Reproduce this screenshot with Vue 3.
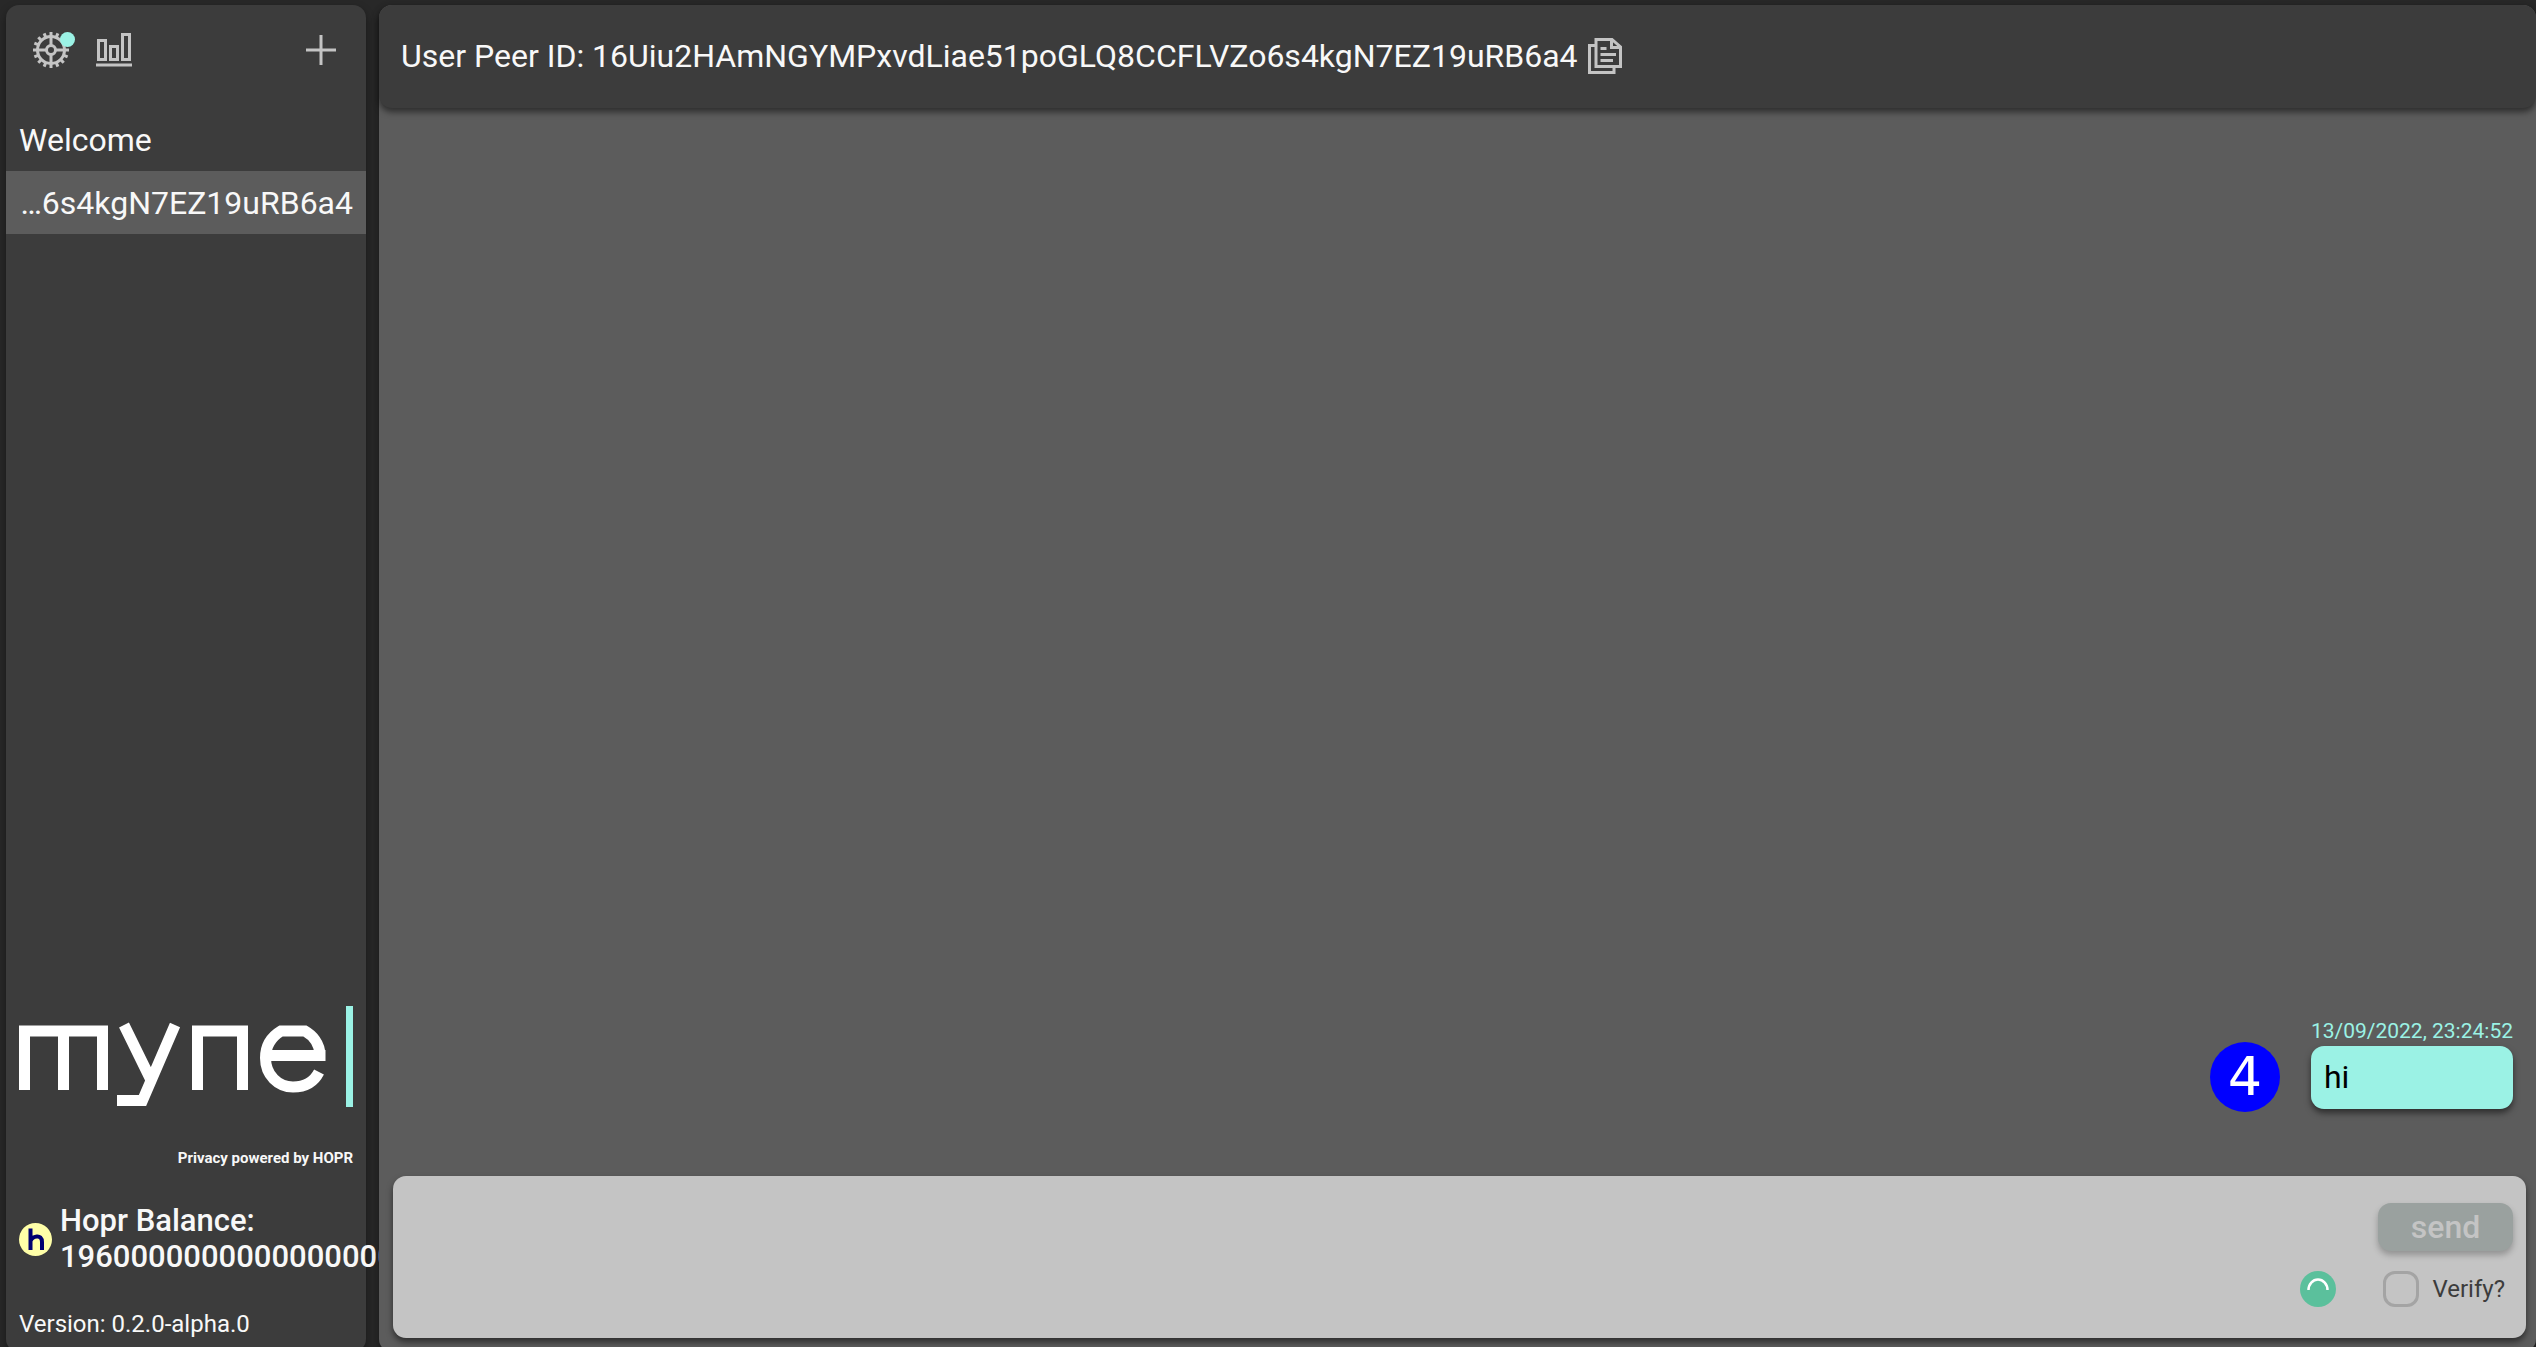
<script setup>
import { ref } from 'vue';

const peerId = '16Uiu2HAmNGYMPxvdLiae51poGLQ8CCFLVZo6s4kgN7EZ19uRB6a4';
const conversations = ref([{ id: peerId, label: '…6s4kgN7EZ19uRB6a4' }]);
const selected = ref(peerId);
const messages = ref([{ time: '13/09/2022, 23:24:52', text: 'hi', count: 4 }]);
const balance = '196000000000000000000';
const draft = ref('');
const verify = ref(false);

// 16 teeth around the settings gear
const teeth = Array.from({ length: 16 }, (_, i) => i * 22.5);

const copyPeerId = () => navigator.clipboard?.writeText(peerId);

const sendMessage = () => {
  messages.value.push({ time: new Date().toLocaleString('en-GB'), text: draft.value });
  draft.value = '';
};
</script>

<template>
  <div class="app">
    <aside class="sidebar">
      <div class="toolbar">
        <button class="icon-button settings" aria-label="Settings">
          <svg width="36" height="36" viewBox="0 0 36 36" fill="none" stroke="#c4c4c4" stroke-width="3">
            <circle cx="18" cy="18" r="13.5" />
            <circle cx="18" cy="18" r="4.5" />
            <path d="M18 4v10M18 22v10M4 18h10M22 18h10" />
            <path v-for="angle in teeth" :key="angle" d="M18 0v4" :transform="`rotate(${angle} 18 18)`" />
          </svg>
          <span class="status-dot"></span>
        </button>
        <button class="icon-button" aria-label="Statistics">
          <svg width="36" height="36" viewBox="0 0 36 36" fill="none" stroke="#c4c4c4" stroke-width="3">
            <path d="M2.5 8.500h7v19h-7zM14.500 14.500h7v13h-7zM26.500 2.500h7v25h-7zM0 33h36" />
          </svg>
        </button>
        <button class="icon-button add" aria-label="Add conversation">
          <svg width="30" height="30" viewBox="0 0 30 30" fill="none" stroke="#c4c4c4" stroke-width="3">
            <path d="M15 0v30M0 15h30" />
          </svg>
        </button>
      </div>

      <nav class="conversations">
        <button class="conversation">Welcome</button>
        <button
          v-for="c in conversations"
          :key="c.id"
          class="conversation peer"
          :class="{ active: c.id === selected }"
          @click="selected = c.id"
        >{{ c.label }}</button>
      </nav>

      <div class="sidebar-footer">
        <svg class="logo" viewBox="0 0 334 101" role="img" aria-label="myne">
          <g fill="none" stroke="#fff" stroke-width="11">
            <path d="M5.500 84V25H83.500V84M44.500 25V84" />
            <path d="M178.500 84V25H223.500V84" />
            <path d="M105 19L131 72M156 19L123.500 94.500H98" />
            <path d="M247 49.500H306.500M301 49.500C301 37 293 29 286 25H262C252 31 246.500 40 246.500 52C246.500 69 259 81 274 81C286 81 295 76 300 66" />
          </g>
          <rect x="327" width="7" height="101" fill="#9bf2e5" />
        </svg>
        <p class="tagline">Privacy powered by HOPR</p>
        <div class="balance">
          <svg width="33" height="33" viewBox="0 0 33 33" fill="none">
            <circle cx="16.500" cy="16.500" r="16.500" fill="#ffffa8" />
            <path d="M11.500 5.500V27M11.500 18C13 13.500 23 10 23 19V27" stroke="#000070" stroke-width="4" />
          </svg>
          <p>Hopr Balance:<br>{{ balance }}</p>
        </div>
        <p class="version">Version: 0.2.0-alpha.0</p>
      </div>
    </aside>

    <main class="chat">
      <header class="chat-header">
        <h1>User Peer ID: {{ peerId }}</h1>
        <button class="icon-button" aria-label="Copy peer ID" @click="copyPeerId">
          <svg width="34" height="36" viewBox="0 0 34 36" fill="none" stroke="#c4c4c4" stroke-width="3">
            <path d="M8 1.500H24L32.500 9V28.500H8zM23.500 1.500V9.500H32.500" />
            <path d="M7 7.500H1.500V34.500H26V29M12.500 10.500H18.500M12.500 16.500H28M12.500 22.500H25" />
          </svg>
        </button>
      </header>

      <section class="messages">
        <div v-for="(m, i) in messages" :key="i" class="message">
          <time>{{ m.time }}</time>
          <span v-if="m.count" class="count">{{ m.count }}</span>
          <p class="bubble">{{ m.text }}</p>
        </div>
      </section>

      <form class="composer" @submit.prevent="sendMessage">
        <textarea v-model="draft" aria-label="Message"></textarea>
        <div class="actions">
          <button class="send" :disabled="!draft">send</button>
          <div class="options">
            <svg class="spinner" width="36" height="36" viewBox="0 0 36 36" fill="none">
              <circle cx="18" cy="18" r="18" fill="#5bc09c" />
              <path d="M8.500 19A9.500 10.500 0 0 1 27.500 19" stroke="#fff" stroke-width="2.500" />
            </svg>
            <label class="verify">
              <input v-model="verify" type="checkbox">
              Verify?
            </label>
          </div>
        </div>
      </form>
    </main>
  </div>
</template>

<style>
body {
  margin: 0;
  overflow: hidden;
  background: #282828;
}
</style>

<style scoped>
.app {
  display: grid;
  grid-template-columns: 360px minmax(0, 1fr);
  gap: 13px;
  height: 100vh;
  padding: 5px 0 0 6px;
  font-family: Roboto, sans-serif;
  font-size: 32px;
  line-height: 36px;
  color: #f8f8f8;
}

h1, p {
  margin: 0;
  font-size: inherit;
  font-weight: 400;
}

button, textarea {
  font: inherit;
  color: inherit;
  border: none;
  background: none;
}

button {
  cursor: pointer;
}

.sidebar {
  display: flex;
  flex-direction: column;
  border-radius: 13px;
  background: #3c3c3c;
  box-shadow: 0 4px 8px rgba(0, 0, 0, 0.4);
}

.toolbar {
  display: flex;
  align-items: center;
  gap: 27px;
  padding: 27px 30px 27px 27px;
}

.icon-button {
  position: relative;
  padding: 0;
}

.icon-button svg {
  display: block;
}

.status-dot {
  position: absolute;
  top: 0;
  right: -6px;
  width: 15px;
  height: 15px;
  border-radius: 50%;
  background: #9bf2e5;
}

.add {
  margin-left: auto;
}

.conversations {
  display: flex;
  flex-direction: column;
  margin-top: 13px;
}

.conversation {
  height: 63px;
  padding: 0 13px;
  text-align: left;
}

.peer {
  text-align: right;
}

.active {
  background: #5c5c5c;
}

.sidebar-footer {
  margin-top: auto;
  padding: 0 13px 10px;
}

.logo {
  display: block;
  width: 100%;
}

.tagline {
  margin-top: 33px;
  font-size: 15px;
  font-weight: 700;
  text-align: right;
}

.balance {
  display: flex;
  align-items: center;
  gap: 8px;
  margin: 27px 0 31px;
}

.balance svg {
  flex: none;
}

.balance p {
  font-size: 31px;
  font-weight: 500;
}

.version {
  font-size: 24px;
}

.chat {
  display: flex;
  flex-direction: column;
  border-radius: 13px;
  background: #5c5c5c;
  box-shadow: 0 4px 8px rgba(0, 0, 0, 0.4);
  z-index: 1;
}

.chat-header {
  display: flex;
  align-items: center;
  gap: 10px;
  box-sizing: border-box;
  height: 103px;
  padding: 0 22px 2px;
  border-radius: 13px;
  background: #3c3c3c;
  box-shadow: 0 4px 6px rgba(0, 0, 0, 0.5);
}

.messages {
  display: flex;
  flex: 1;
  flex-direction: column;
  justify-content: flex-end;
  padding: 0 23px 64px;
}

.message {
  display: grid;
  grid-template-columns: auto auto;
  align-items: center;
  justify-content: end;
  column-gap: 31px;
}

.message time {
  grid-column: 2;
  font-size: 21px;
  line-height: 22px;
  color: #9bf2e5;
}

.count {
  width: 70px;
  border-radius: 50%;
  background: #00f;
  color: #fff;
  font: 54px/70px "DejaVu Sans", sans-serif;
  text-align: center;
}

.bubble {
  grid-column: 2;
  padding: 13px 13px 14px;
  border-radius: 13px;
  background: #9bf2e5;
  color: #000;
  box-shadow: 0 4px 6px rgba(0, 0, 0, 0.5);
}

.composer {
  display: flex;
  box-sizing: border-box;
  height: 162px;
  margin: 0 10px 14px 14px;
  padding: 0 13px;
  border-radius: 13px;
  background: #c4c4c4;
  color: #3c3c3c;
  box-shadow: 0 4px 6px rgba(0, 0, 0, 0.5);
}

textarea {
  flex: 1;
  padding: 13px 0;
  resize: none;
  outline: none;
}

.actions {
  display: flex;
  flex-direction: column;
  align-items: flex-end;
  gap: 20px;
  padding-top: 27px;
}

.send {
  width: 135px;
  height: 48px;
  padding: 0;
  border-radius: 13px;
  background: #9aa19f;
  color: #c4c4c4;
  font-weight: 500;
  box-shadow: 0 4px 6px rgba(0, 0, 0, 0.25);
}

.options,
.verify {
  display: flex;
  align-items: center;
}

.options {
  gap: 47px;
  padding-right: 8px;
}

.verify {
  gap: 13px;
  font-size: 24px;
}

.verify input {
  width: 36px;
  height: 36px;
  margin: 0;
  appearance: none;
  border: 3px solid #a4a4a4;
  border-radius: 12px;
}

.verify input:checked {
  background: #9bf2e5;
}
</style>
